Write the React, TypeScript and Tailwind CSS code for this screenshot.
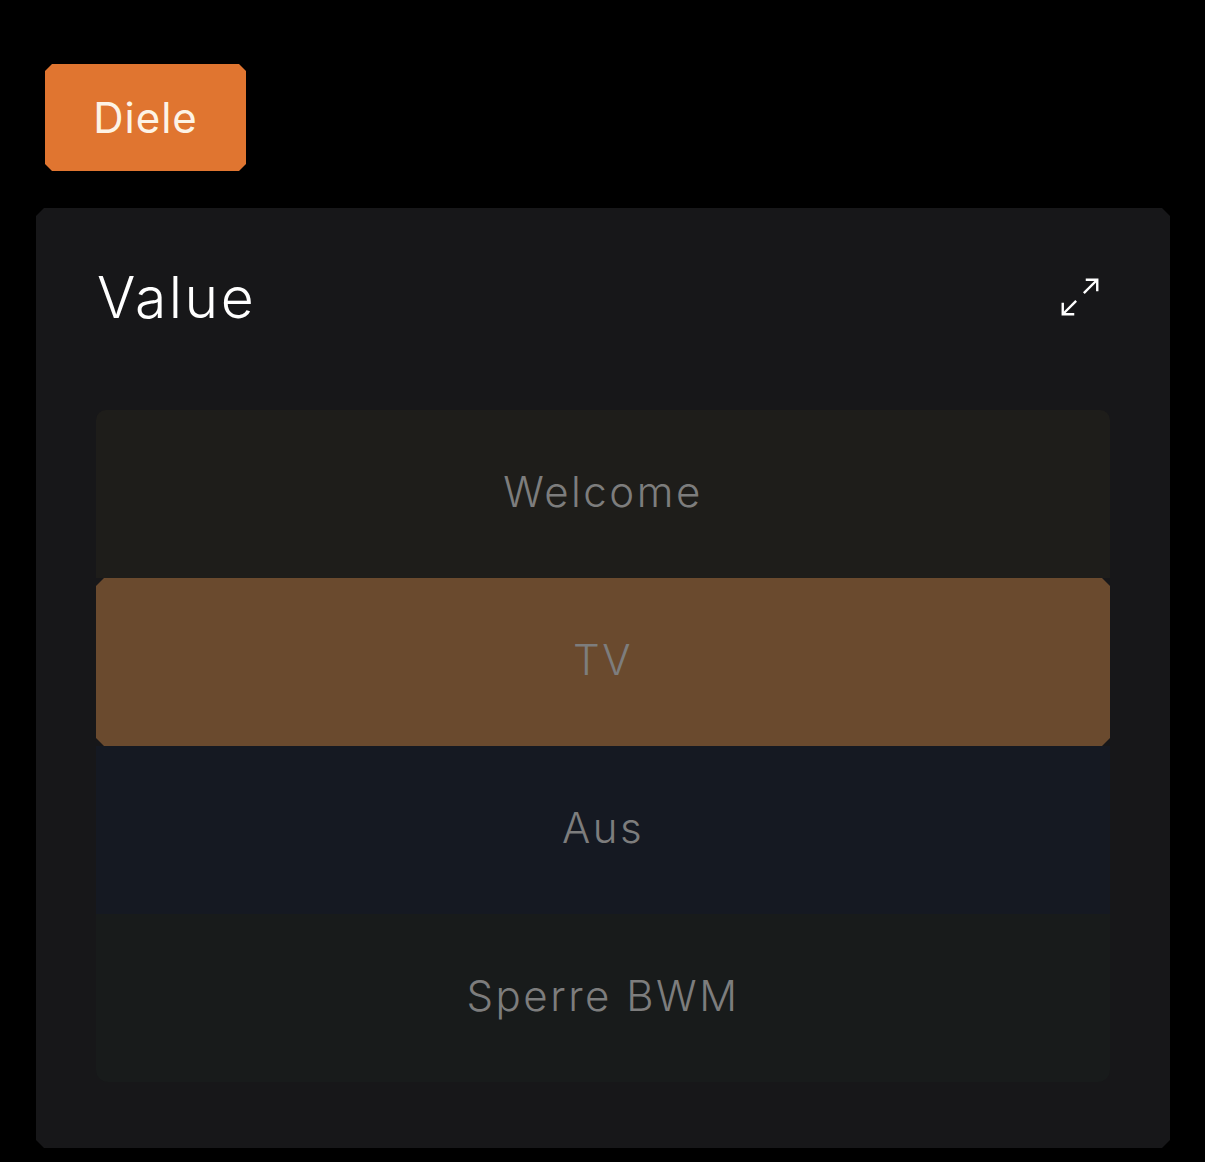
import React from 'react';

const rows = [
  { label: 'Welcome', bg: 'bg-[#1e1d1a]', shape: 'rounded-t-[10px]' },
  { label: 'TV', bg: 'bg-[#6a4a2e]', shape: '[clip-path:polygon(8px_0,calc(100%_-_8px)_0,100%_8px,100%_calc(100%_-_8px),calc(100%_-_8px)_100%,8px_100%,0_calc(100%_-_8px),0_8px)]' },
  { label: 'Aus', bg: 'bg-[#151922]', shape: '' },
  { label: 'Sperre BWM', bg: 'bg-[#181b1b]', shape: 'rounded-b-[12px]' },
];

const ExpandIcon = () => (
  <svg width="46" height="46" viewBox="0 0 24 24" fill="none" stroke="white" strokeWidth="1.25" strokeLinecap="butt" strokeLinejoin="miter">
    <polyline points="15 3 21 3 21 9" />
    <polyline points="9 21 3 21 3 15" />
    <line x1="21" y1="3" x2="14" y2="10" />
    <line x1="3" y1="21" x2="10" y2="14" />
  </svg>
);

const App: React.FC = () => {
  return (
    <div className="min-h-screen w-full bg-black pt-[64px] pl-[36px] pr-[35px] font-['Inter',sans-serif]">
      {/* room label */}
      <div className="ml-[9px] w-[201px] h-[107px] bg-[#e07530] flex items-center justify-center [clip-path:polygon(7px_0,calc(100%_-_7px)_0,100%_7px,100%_calc(100%_-_7px),calc(100%_-_7px)_100%,7px_100%,0_calc(100%_-_7px),0_7px)]">
        <span className="text-[42px] leading-none text-[#fdf3e6] tracking-[1px]">Diele</span>
      </div>

      {/* value card */}
      <div className="mt-[37px] bg-[#171719] pt-[53px] px-[60px] pb-[66px] [clip-path:polygon(8px_0,calc(100%_-_8px)_0,100%_8px,100%_calc(100%_-_8px),calc(100%_-_8px)_100%,8px_100%,0_calc(100%_-_8px),0_8px)]">
        <div className="h-[72px] flex items-center justify-between pl-[1px]">
          <h2 className="text-[57px] leading-none text-white font-light tracking-[2.5px]">Value</h2>
          <div className="mr-[7px]">
            <ExpandIcon />
          </div>
        </div>

        <div className="mt-[77px] flex flex-col">
          {rows.map((r) => (
            <div key={r.label} className={`h-[168px] flex items-center justify-center pb-[4px] ${r.bg} ${r.shape}`}>
              <span className="text-[42px] leading-none text-[#7d7d7d] tracking-[2.5px] font-light">{r.label}</span>
            </div>
          ))}
        </div>
      </div>
    </div>
  );
};

export default App;
